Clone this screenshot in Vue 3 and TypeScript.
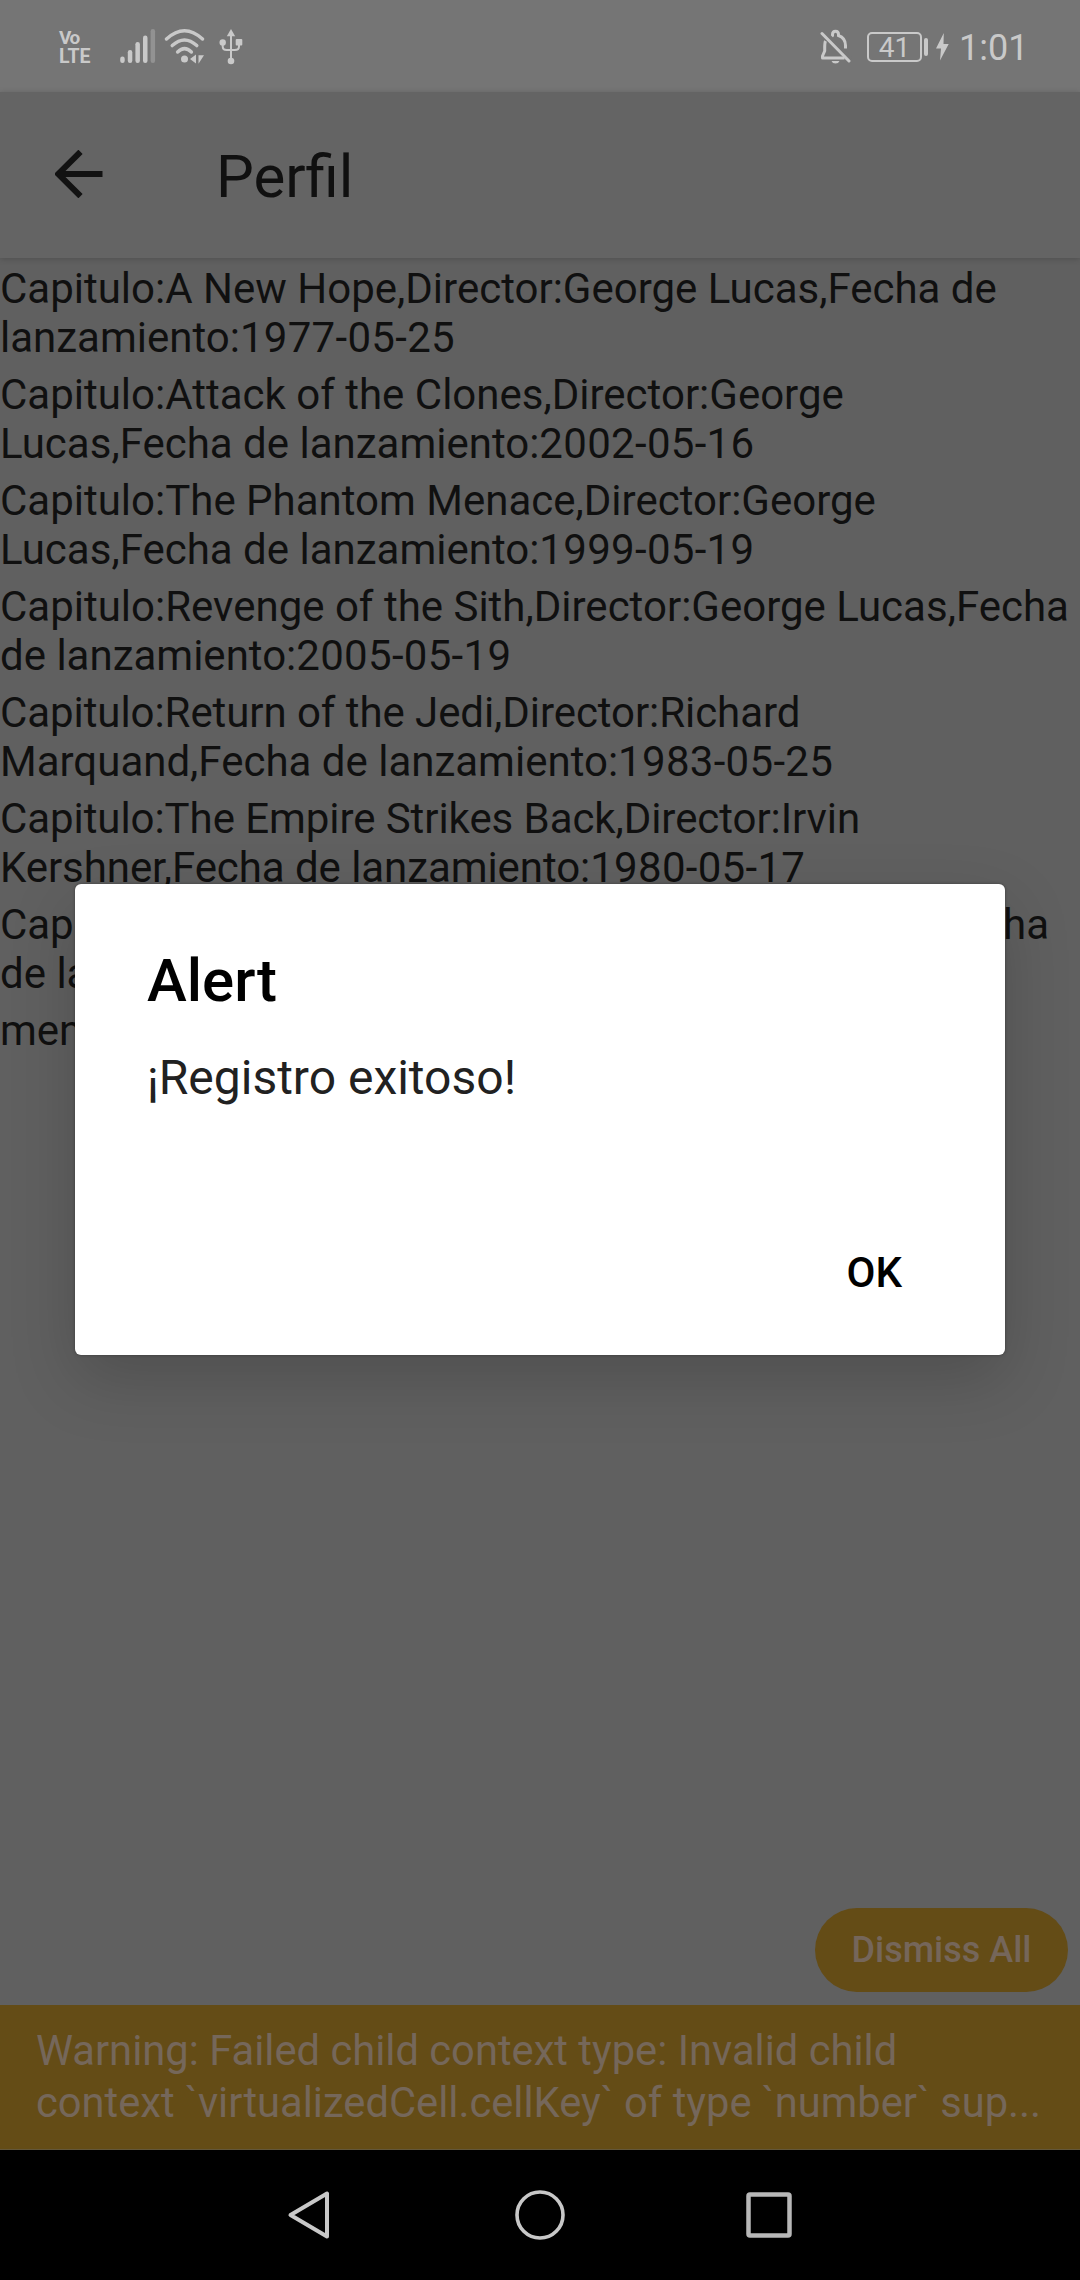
<script setup lang="ts">
interface Line { text: string; date?: string; tight?: boolean }

const films: Line[][] = [
  [{ text: 'Capitulo:A New Hope,Director:George Lucas,Fecha de' }, { text: 'lanzamiento:', date: '1977-05-25' }],
  [{ text: 'Capitulo:Attack of the Clones,Director:George' }, { text: 'Lucas,Fecha de lanzamiento:', date: '2002-05-16' }],
  [{ text: 'Capitulo:The Phantom Menace,Director:George' }, { text: 'Lucas,Fecha de lanzamiento:', date: '1999-05-19' }],
  [{ text: 'Capitulo:Revenge of the Sith,Director:George Lucas,Fecha' }, { text: 'de lanzamiento:', date: '2005-05-19' }],
  [{ text: 'Capitulo:Return of the Jedi,Director:Richard', tight: true }, { text: 'Marquand,Fecha de lanzamiento:', date: '1983-05-25' }],
  [{ text: 'Capitulo:The Empire Strikes Back,Director:Irvin', tight: true }, { text: 'Kershner,Fecha de lanzamiento:', date: '1980-05-17', tight: true }],
  [{ text: 'Capitulo:The Force Awakens,Director:J. J. Abrams,Fecha', tight: true }, { text: 'de la' }],
  [{ text: 'men' }],
]
const bars: number[] = [6.5, 13, 21, 27.5, 34]
</script>

<template>
  <div class="screen">
    <header class="status">
      <div class="volte"><span>Vo</span><span>LTE</span></div>
      <svg class="signal" width="36" height="36" viewBox="0 0 36 36">
        <rect v-for="(h, i) in bars" :key="i" :x="0.2 + i * 7.6" :y="35 - h" width="4.5" :height="h" rx="2.2" fill="#c9c9c9" :opacity="i === 4 ? 0.35 : 1" />
      </svg>
      <svg class="wifi" width="42" height="38" viewBox="0 0 42 38">
        <g fill="none" stroke="#c9c9c9" stroke-width="3.4" stroke-linecap="round">
          <path d="M2.5 11Q20.500 -5.500 38.500 11" />
          <path d="M8.200 17.600Q20.500 6.300 32.800 17.600" />
          <path d="M13.600 24Q20.500 17.200 27.400 24" />
        </g>
        <circle cx="20.500" cy="31" r="3.500" fill="#c9c9c9" />
        <path d="M26 31l6-4.500v9zM34.500 27.200h5.500l-5.500 8.500z" fill="#c9c9c9" />
      </svg>
      <svg class="usb" width="24" height="38" viewBox="0 0 24 38">
        <g fill="none" stroke="#c9c9c9" stroke-width="2">
          <path d="M12 6v26M3.700 15v3.500q0 3.500 4 3.500h8q4.300 0 4.300-3.500v-4" />
        </g>
        <path d="M12 1l4.200 7.200h-8.400z" fill="#c9c9c9" />
        <circle cx="3.700" cy="14.500" r="3.200" fill="#c9c9c9" />
        <rect x="16.700" y="11" width="6.600" height="6.600" rx="1" fill="#c9c9c9" />
        <circle cx="12" cy="33" r="3.300" fill="#c9c9c9" />
      </svg>
      <div class="grow"></div>
      <svg class="bell" width="32" height="36" viewBox="0 0 32 36">
        <g fill="none" stroke="#c9c9c9" stroke-width="3">
          <path d="M5.500 12C4.500 14 4.700 17 4.700 22L2.500 27V29H24.500" stroke-linejoin="round" />
          <path d="M11.500 8L12.500 6.500V5.500Q12.500 2.200 15.500 2.200T18.500 5.500V6.500Q25.500 9 25.500 16.500V19.500" />
        </g>
        <path d="M2 4.500L29 32" stroke="#757575" stroke-width="5" transform="translate(1.800 -1.800)" />
        <path d="M2 4.500L29 32" stroke="#c9c9c9" stroke-width="3" stroke-linecap="round" />
        <path d="M11.500 32h8q-1 2.500-4 2.500t-4-2.500z" fill="#c9c9c9" />
      </svg>
      <div class="battery">41</div>
      <div class="nub"></div>
      <svg class="bolt" width="13" height="28" viewBox="0 0 13 28">
        <path d="M7.800 0L0 15.500H5L4 27.500L12.700 11H7.500z" fill="#c9c9c9" />
      </svg>
      <div class="time">1:01</div>
    </header>

    <nav class="appbar">
      <svg width="48" height="48" viewBox="0 0 48 48">
        <path d="M47.500 24H3M25.500 1.800L3.300 24L25.500 46.200" fill="none" stroke="#121212" stroke-width="6" />
      </svg>
      <h1>Perfil</h1>
    </nav>

    <main class="list">
      <p v-for="(film, i) in films" :key="i">
        <span v-for="line in film" :key="line.text" :class="{ tight: line.tight }">{{ line.text }}<b v-if="line.date">{{ line.date }}</b></span>
      </p>
    </main>

    <div class="dismiss-row"><button class="dismiss">Dismiss All</button></div>
    <footer class="warning">
      <span>Warning: Failed child context type: Invalid child</span>
      <span>context `virtualizedCell.cellKey` of type `number` sup...</span>
    </footer>

    <div class="navbar">
      <svg class="back" width="50" height="54" viewBox="0 0 50 54"><path d="M7.500 27L44 5.500V48.500z" fill="none" stroke="#c8c8c8" stroke-width="4" stroke-linejoin="round" /></svg>
      <svg width="54" height="54" viewBox="0 0 54 54"><circle cx="27" cy="27" r="23" fill="none" stroke="#c8c8c8" stroke-width="3.600" /></svg>
      <svg width="50" height="54" viewBox="0 0 50 54"><rect x="4.500" y="6.500" width="41" height="41" rx="1.500" fill="none" stroke="#b8b8b8" stroke-width="4.500" /></svg>
    </div>

    <section class="dialog" role="alertdialog">
      <h2>Alert</h2>
      <p class="message">¡Registro exitoso!</p>
      <button class="ok">OK</button>
    </section>
  </div>
</template>

<style>
body { margin: 0; background: #000; }
</style>

<style scoped>
.screen {
  position: relative;
  width: 1080px;
  height: 2280px;
  display: flex;
  flex-direction: column;
  overflow: hidden;
  background: #606060;
  color: #101010;
  font-family: Roboto, "Noto Sans", sans-serif;
}
.screen * { box-sizing: border-box; }
h1, h2, p { margin: 0; font-weight: 400; }
button { border: 0; padding: 0; background: none; font-family: inherit; }
svg { display: block; flex: none; }
span { display: block; white-space: nowrap; }

.status {
  height: 92px;
  flex: none;
  display: flex;
  align-items: flex-start;
  padding: 28px 0 0 59px;
  background: #757575;
  color: #c9c9c9;
}
.volte { width: 61px; font-size: 19.500px; line-height: 19.500px; font-weight: 700; }
.volte span:first-child { font-size: 19px; margin-top: -0.500px; letter-spacing: -1.500px; }
.wifi { margin-left: 8px; }
.usb { margin-left: 13px; }
.grow { flex: 1; }
.bell { margin: 1px 15px 0 0; }
.battery {
  width: 55px; height: 30px; margin-top: 4px;
  border: 2px solid #c9c9c9; border-radius: 5px;
  font-size: 28px; line-height: 27px; text-align: center;
}
.nub { width: 4px; height: 18px; margin: 10px 8px 0 2px; border-radius: 2px; background: #c9c9c9; }
.bolt { margin: 5px 10px 0 0; }
.time { width: 121px; margin-top: -1px; font-size: 36px; line-height: 43px; }

.appbar {
  height: 166px;
  flex: none;
  display: flex;
  align-items: center;
  padding: 0 0 0 55px;
  background: #646464;
  box-shadow: 0 1px 6px rgba(0, 0, 0, 0.18);
}
.appbar svg { margin-top: -2px; }
.appbar h1 { margin: 4px 0 0 113px; font-size: 60px; line-height: 70px; }

.list { flex: 1; padding-top: 6px; font-size: 42px; line-height: 49px; color: #101010; }
.list p { margin-bottom: 8px; }
.list b { font-weight: 400; letter-spacing: 0.3px; }
.list .tight { letter-spacing: -0.070px; }

.dismiss-row { display: flex; justify-content: flex-end; padding: 0 12px 13px 0; }
.dismiss {
  width: 253px; height: 84px; border-radius: 42px;
  background: #644c16; color: #75665a;
  font-size: 36px; font-weight: 500;
}
.warning {
  height: 145px; flex: none;
  padding: 20px 36px 0;
  background: #644c16; color: #75675a;
  border-bottom: 1px solid #63573a;
  font-size: 41.700px; line-height: 52px;
}
.navbar {
  height: 130px; flex: none;
  display: flex; justify-content: center; align-items: center;
  gap: 177px;
  background: #000;
}
.back { margin: 0 3px 0 -3px; }
.dialog {
  position: absolute;
  left: 75px; top: 884px;
  width: 930px; height: 471px;
  display: flex; flex-direction: column;
  padding: 62px 103px 0 72px;
  background: #fff;
  border-radius: 6px;
  box-shadow: 0 24px 66px rgba(0, 0, 0, 0.18), 0 0 3px rgba(0, 0, 0, 0.35);
}
.dialog h2 { font-size: 60px; line-height: 70px; font-weight: 500; color: #000; }
.message { margin-top: 34px; font-size: 48px; line-height: 56px; color: #212121; }
.ok { align-self: flex-end; margin-top: 142px; font-size: 42px; line-height: 49px; font-weight: 500; color: #000; }
</style>
